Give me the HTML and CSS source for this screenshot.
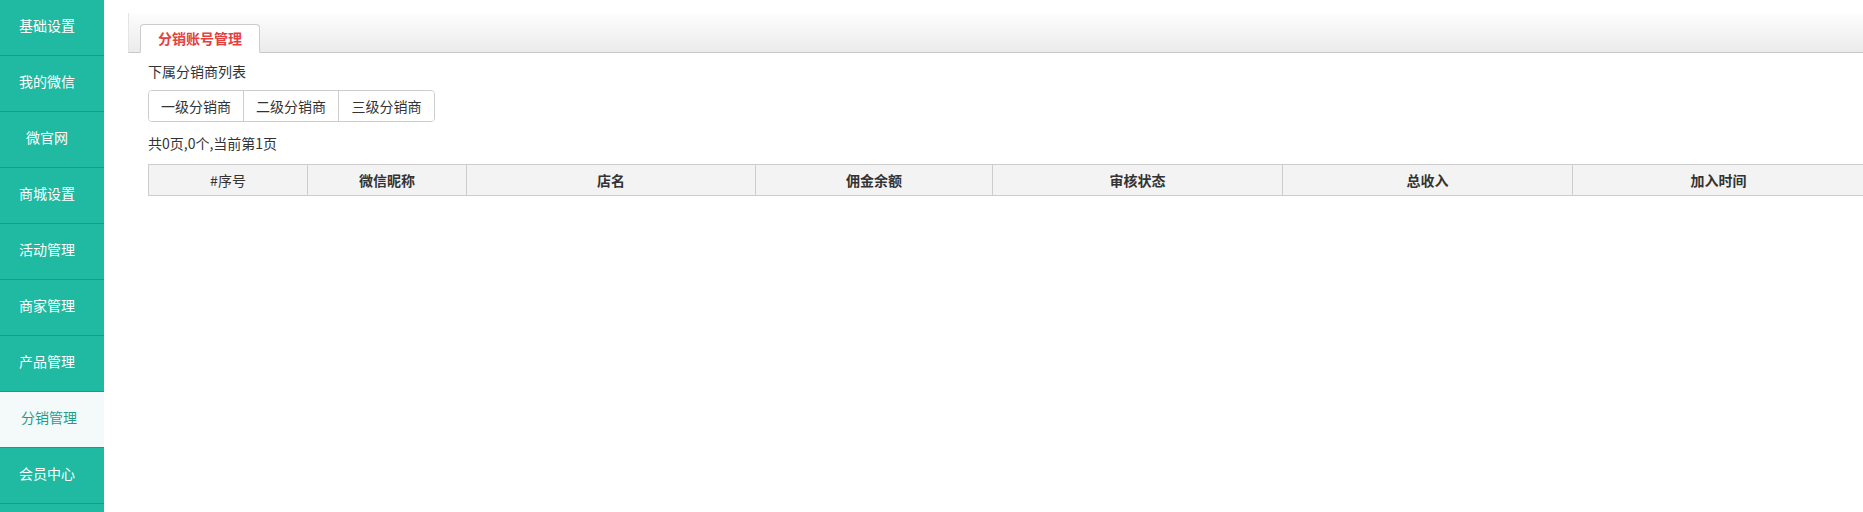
FILE: index.html
```html
<!DOCTYPE html>
<html lang="zh-CN">
<head>
  <meta charset="UTF-8">
  <title>分销账号管理</title>
  <link rel="stylesheet" href="styles.css">
</head>
<body>

<div class="layout">
  <ul class="sidebar">
    <li>基础设置</li>
    <li>我的微信</li>
    <li>微官网</li>
    <li>商城设置</li>
    <li>活动管理</li>
    <li>商家管理</li>
    <li>产品管理</li>
    <li class="active">分销管理</li>
    <li>会员中心</li>
  </ul>

  <div class="main">
    <div class="tabbar">
      <span class="tab">分销账号管理</span>
    </div>

    <div class="content">
      <p class="title">下属分销商列表</p>
      <div class="btn-group">
        <button>一级分销商</button>
        <button>二级分销商</button>
        <button>三级分销商</button>
      </div>
      <p class="pager">共0页,0个,当前第1页</p>

      <table class="list">
        <colgroup>
          <col class="c-id">
          <col class="c-nick">
          <col class="c-shop">
          <col class="c-money">
          <col class="c-state">
          <col class="c-income">
          <col class="c-time">
        </colgroup>
        <thead>
          <tr>
            <th class="normal">#序号</th>
            <th>微信昵称</th>
            <th>店名</th>
            <th>佣金余额</th>
            <th>审核状态</th>
            <th>总收入</th>
            <th>加入时间</th>
          </tr>
        </thead>
        <tbody></tbody>
      </table>
    </div>
  </div>
</div>

</body>
</html>
```

FILE: styles.css
```css
html, body {
  margin: 0;
  height: 100%;
  overflow: hidden;
}
body {
  font-family: "Liberation Sans", "Noto Sans CJK SC", sans-serif;
  font-size: 14px;
  color: #333;
  background: #fff;
}
.layout {
  display: flex;
  height: 100%;
}
.sidebar {
  list-style: none;
  margin: 0;
  padding: 0;
  width: 104px;
  flex-shrink: 0;
  background: #20b9a1;
}
.sidebar li {
  height: 55px;
  line-height: 50px;
  padding-right: 10px;
  text-align: center;
  color: #fff;
  border-bottom: 1px solid #179c88;
  font-family: "Noto Sans CJK SC", sans-serif;
}
.sidebar li.active {
  background: #f4f9f9;
  color: #1f9d8c;
  padding-right: 6px;
}
.main {
  flex: 1;
  min-width: 0;
  padding: 13px 0 0 24px;
}
.tabbar {
  height: 39px;
  border-bottom: 1px solid #c8c8c8;
  border-left: 1px solid #e4e4e4;
  background: linear-gradient(#fdfdfd, #ebebeb);
  display: flex;
  align-items: flex-end;
  padding-left: 11px;
}
.tab {
  width: 118px;
  height: 27px;
  line-height: 27px;
  margin-bottom: -1px;
  text-align: center;
  background: #fff;
  border: 1px solid #ccc;
  border-bottom: 1px solid #fff;
  border-radius: 4px 4px 0 0;
  color: #e5403f;
  font-weight: bold;
  font-family: "Noto Sans CJK SC", sans-serif;
}
.content {
  padding-left: 20px;
}
.title, .pager {
  margin: 0;
  line-height: 20px;
  font-family: "Noto Sans CJK SC", sans-serif;
}
.title {
  margin-top: 8px;
}
.pager {
  margin-top: 11px;
}
.btn-group {
  display: inline-flex;
  margin-top: 9px;
  border: 1px solid #ccc;
  border-radius: 4px;
  overflow: hidden;
}
.btn-group button {
  width: 95px;
  height: 30px;
  padding: 0;
  border: none;
  border-right: 1px solid #ccc;
  background: #fff;
  color: #333;
  font-size: 14px;
  font-family: "Noto Sans CJK SC", sans-serif;
}
.btn-group button:last-child {
  border-right: none;
}
.list {
  margin-top: 11px;
  border-collapse: collapse;
  table-layout: fixed;
  width: 1716px;
}
.list th {
  height: 30px;
  padding: 0;
  background: #f3f3f3;
  border: 1px solid #cdcdcd;
  font-weight: bold;
  color: #333;
  font-family: "Noto Sans CJK SC", sans-serif;
}
.list th.normal {
  font-weight: normal;
}
.c-id { width: 159px; }
.c-nick { width: 159px; }
.c-shop { width: 289px; }
.c-money { width: 237px; }
.c-state { width: 290px; }
.c-income { width: 290px; }
.c-time { width: 292px; }
```
